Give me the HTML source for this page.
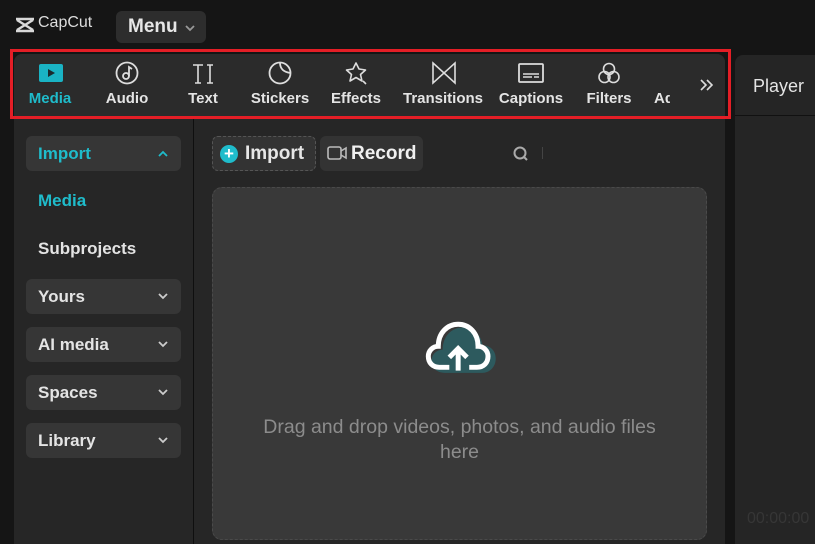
<!DOCTYPE html><html><head><style>
*{margin:0;padding:0;box-sizing:border-box}
body{width:815px;height:544px;background:#151515;font-family:"Liberation Sans",sans-serif;position:relative;overflow:hidden;color:#e6e6e6}
.a{position:absolute}
.tab{position:absolute;top:90px;font-weight:bold;font-size:15px;transform:translateX(-50%);white-space:nowrap;color:#e4e4e4}
.ic{position:absolute;top:61px}
.side{position:absolute;left:26px;width:155px;height:35px;background:#363636;border-radius:6px;font-weight:bold;font-size:17px;padding:8px 12px;color:#e4e4e4}
.side svg{position:absolute;right:13px;top:14px}
</style></head><body>
<svg class="a" style="left:14px;top:17px" width="22" height="16" viewBox="0 0 22 16"><path d="M2 2h18M2 14h18M3 3l8 5-8 5M19 3l-8 5 8 5" stroke="#d8d8d8" stroke-width="2.4" fill="none"/></svg>
<div class="a" style="left:38px;top:14px;font-size:16px;color:#ddd">CapCut</div>
<div class="a" style="left:116px;top:11px;width:90px;height:32px;background:#2d2d2d;border-radius:6px;font-weight:bold;font-size:19px;padding:5px 12px">Menu</div>
<svg class="a" style="left:184px;top:24px" width="12" height="8"><path d="M2 2l4 4 4-4" stroke="#999" stroke-width="1.8" fill="none"/></svg>
<div class="a" style="left:14px;top:54px;width:711px;height:490px;background:#262626;border-radius:8px 8px 0 0"></div>
<div class="a" style="left:14px;top:54px;width:711px;height:62px;background:#2b2b2b;border-radius:8px 8px 0 0"></div>
<div class="a" style="left:193px;top:116px;width:1px;height:428px;background:#0f0f0f"></div>
<div class="a" style="left:735px;top:55px;width:80px;height:489px;background:#252525;border-radius:8px 0 0 0"></div>
<div class="a" style="left:735px;top:115px;width:80px;height:1px;background:#111"></div>
<div class="a" style="left:753px;top:76px;font-size:18px;color:#e4e4e4">Player</div>
<div class="a" style="left:747px;top:510px;font-size:16px;color:#363636">00:00:00</div>
<div class="a" style="left:10px;top:49px;width:721px;height:70px;border:3px solid #e41e26"></div>
<svg class="ic" style="left:38px" width="26" height="24"><rect x="1" y="3" width="24" height="18" rx="2" fill="#1ab3c4"/><path d="M10 8v8l7-4z" fill="#1a2a2e"/></svg>
<svg class="ic" style="left:115px" width="26" height="26"><circle cx="12" cy="12" r="10.5" stroke="#ddd" stroke-width="1.8" fill="none"/><circle cx="11" cy="15" r="3" stroke="#ddd" stroke-width="1.8" fill="none"/><path d="M14 15V6l3 2" stroke="#ddd" stroke-width="1.8" fill="none"/></svg>
<svg class="ic" style="left:191px" width="26" height="26"><path d="M2 4h10M7 4v18M4 22h6M16 4h6M19 4v18M16 22h6" stroke="#ddd" stroke-width="1.6" fill="none"/></svg>
<svg class="ic" style="left:268px" width="26" height="26"><path d="M12 1.5a10.5 10.5 0 1 0 10.5 10.5A10.5 10.5 0 0 0 12 1.5zM12 1.5c0 6 3 9.5 10.5 10.5" stroke="#ddd" stroke-width="1.8" fill="none"/></svg>
<svg class="ic" style="left:344px" width="26" height="26"><path d="M12 2l3 6 6.5 1-5 4.5 1.5 6.5-6-3.5-6 3.5 1.5-6.5-5-4.5 6.5-1zM19 20l3 3" stroke="#ddd" stroke-width="1.6" fill="none" stroke-linejoin="round"/></svg>
<svg class="ic" style="left:431px" width="26" height="26"><path d="M2 2l22 20V2L2 22z" stroke="#ddd" stroke-width="1.6" fill="none"/></svg>
<svg class="ic" style="left:518px" width="26" height="26"><rect x="1" y="3" width="24" height="18" rx="1" stroke="#ddd" stroke-width="1.8" fill="none"/><path d="M5 13h16M5 16h9M16 16h5" stroke="#ddd" stroke-width="1.5"/></svg>
<svg class="ic" style="left:597px" width="26" height="26"><circle cx="12" cy="8" r="5.5" stroke="#ddd" stroke-width="1.6" fill="none"/><circle cx="7.5" cy="16" r="5.5" stroke="#ddd" stroke-width="1.6" fill="none"/><circle cx="16.5" cy="16" r="5.5" stroke="#ddd" stroke-width="1.6" fill="none"/></svg>
<div class="tab" style="left:50px;color:#1fbccb">Media</div>
<div class="tab" style="left:127px">Audio</div>
<div class="tab" style="left:203px">Text</div>
<div class="tab" style="left:280px">Stickers</div>
<div class="tab" style="left:356px">Effects</div>
<div class="tab" style="left:443px">Transitions</div>
<div class="tab" style="left:531px">Captions</div>
<div class="tab" style="left:609px">Filters</div>
<div class="a" style="left:654px;top:90px;width:16px;overflow:hidden;font-weight:bold;font-size:15px;color:#e4e4e4">Ad</div>
<svg class="a" style="left:699px;top:78px" width="16" height="14"><path d="M2 2l5 5-5 5M8 2l5 5-5 5" stroke="#ddd" stroke-width="1.6" fill="none"/></svg>
<div class="side" style="top:136px;color:#1fbccb">Import<svg width="10" height="7"><path d="M1 6l4-4 4 4" stroke="#1fbccb" stroke-width="1.8" fill="none"/></svg></div>
<div class="a" style="left:38px;top:191px;font-weight:bold;font-size:17px;color:#1fbccb">Media</div>
<div class="a" style="left:38px;top:239px;font-weight:bold;font-size:17px;color:#e4e4e4">Subprojects</div>
<div class="side" style="top:279px">Yours<svg width="10" height="7"><path d="M1 1l4 4 4-4" stroke="#ccc" stroke-width="1.8" fill="none"/></svg></div>
<div class="side" style="top:327px">AI media<svg width="10" height="7"><path d="M1 1l4 4 4-4" stroke="#ccc" stroke-width="1.8" fill="none"/></svg></div>
<div class="side" style="top:375px">Spaces<svg width="10" height="7"><path d="M1 1l4 4 4-4" stroke="#ccc" stroke-width="1.8" fill="none"/></svg></div>
<div class="side" style="top:423px">Library<svg width="10" height="7"><path d="M1 1l4 4 4-4" stroke="#ccc" stroke-width="1.8" fill="none"/></svg></div>
<div class="a" style="left:212px;top:136px;width:104px;height:35px;background:#333;border:1px dashed #555;border-radius:6px;font-weight:bold;font-size:19px;padding:6px 0 0 32px">Import</div>
<div class="a" style="left:220px;top:145px;width:18px;height:18px;border-radius:50%;background:#1fbccb;color:#fff;font-size:17px;line-height:17px;text-align:center;font-weight:bold">+</div>
<div class="a" style="left:320px;top:136px;width:103px;height:35px;background:#333;border-radius:6px;font-weight:bold;font-size:19px;padding:7px 0 0 31px;color:#f0f0f0">Record</div>
<svg class="a" style="left:327px;top:145px" width="22" height="16"><rect x="1" y="2" width="13" height="12" rx="2" stroke="#bbb" stroke-width="1.6" fill="none"/><path d="M14 6l5-3v10l-5-3" stroke="#bbb" stroke-width="1.6" fill="none"/></svg>
<svg class="a" style="left:512px;top:145px" width="18" height="18"><circle cx="8" cy="8" r="5.5" stroke="#aaa" stroke-width="2" fill="none"/><path d="M12 12l3 3" stroke="#aaa" stroke-width="2"/></svg>
<div class="a" style="left:542px;top:147px;width:1px;height:12px;background:#444"></div>
<div class="a" style="left:212px;top:187px;width:495px;height:353px;background:#393939;border:1px dashed #4a4a4a;border-radius:10px"></div>
<svg class="a" style="left:425px;top:307px" width="84" height="72" viewBox="0 0 76 60"><path d="M18 57c-8 0-12-5-12-11 0-6 5-10 10-10 0-12 8-20 18-20 10 0 17 7 18 16 7 0 12 5 12 12 0 8-6 13-12 13z" fill="#2d5a5e"/><path d="M13 52c-6 0-10-4-10-10 0-5 4-9 9-9 0-12 8-20 18-20 10 0 18 8 18 20 5 0 9 4 9 9 0 6-4 10-10 10h-7M22 52h-9" stroke="#fff" stroke-width="4.5" fill="none"/><path d="M30 55V36M22 43l8-8 8 8" stroke="#fff" stroke-width="4.5" fill="none"/></svg>
<div class="a" style="left:212px;top:415px;width:495px;text-align:center;font-size:19.5px;line-height:25px;color:#8c8c8c">Drag and drop videos, photos, and audio files<br>here</div>
</body></html>
